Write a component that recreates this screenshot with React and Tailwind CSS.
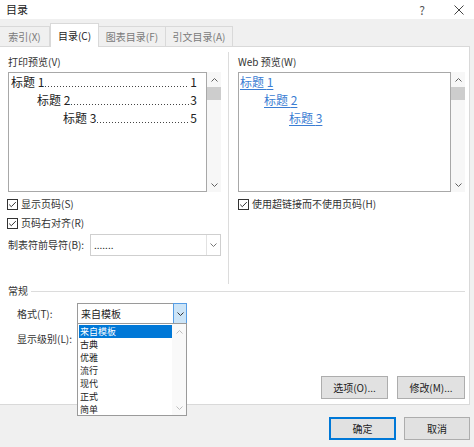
const Check = () => (
  <svg width="11" height="11" viewBox="0 0 11 11" className="shrink-0">
    <rect x="0.5" y="0.5" width="10" height="10" fill="#fff" stroke="#333" />
    <path d="M2.2 5.6 L4.3 7.7 L8.8 3.1" fill="none" stroke="#333" strokeWidth="1" />
  </svg>
);

const Chevron = ({ up, color = "#606060" }) => (
  <svg width="7" height="4" viewBox="0 0 7 4">
    <path
      d={up ? "M0.5 3.5 L3.5 0.5 L6.5 3.5" : "M0.5 0.5 L3.5 3.5 L6.5 0.5"}
      fill="none"
      stroke={color}
      strokeWidth="1"
    />
  </svg>
);

const ScrollBar = () => (
  <div className="w-[14px] h-full flex flex-col bg-[#f7f7f7]">
    <div className="h-[15px] flex items-center justify-center">
      <Chevron up />
    </div>
    <div className="h-[13px] bg-[#cdcdcd]" />
    <div className="flex-1" />
    <div className="h-[14px] flex items-center justify-center">
      <Chevron />
    </div>
  </div>
);

// tab leader: dotted line drawn as a repeating background
const PrintLine = ({ indent, n, page }) => (
  <div className="flex h-[18px] items-center whitespace-nowrap" style={{ paddingLeft: indent }}>
    <span>标题 {n}</span>
    <span className="flex-1 self-stretch mx-[1px] bg-[linear-gradient(to_right,#444_1px,transparent_1px)] bg-[length:3px_1px] bg-repeat-x bg-[position:0_13px]" />
    <span>{page}</span>
  </div>
);

const WebLine = ({ indent, n }) => (
  <div className="flex h-[18px] items-center" style={{ paddingLeft: indent }}>
    <span className="text-[#3b7dd3] underline underline-offset-[2px]">标题 {n}</span>
  </div>
);

const CheckRow = ({ children, className = "" }) => (
  <div className={"h-[14px] flex items-center gap-[3px] " + className}>
    <Check />
    <span>{children}</span>
  </div>
);

const Tab = ({ label, width, active }) =>
  active ? (
    <div
      className="h-[24px] -mb-px relative z-10 bg-white border-l border-t border-r border-[#d9d9d9] flex items-center justify-center text-[#222]"
      style={{ width }}
    >
      {label}
    </div>
  ) : (
    <div
      className="h-[20px] border-t border-r border-[#d9d9d9] flex items-center justify-center text-[#7a7a7a]"
      style={{ width }}
    >
      {label}
    </div>
  );

const formats = ["来自模板", "古典", "优雅", "流行", "现代", "正式", "简单"];

export default function App() {
  return (
    <div className="w-[474px] h-[447px] overflow-hidden bg-[#f0f0f0] font-['Noto_Sans_CJK_SC',sans-serif] text-[10px] leading-none text-[#333] select-none">
      {/* Title bar */}
      <div className="h-[19px] bg-white flex items-center pl-[6px] pr-[10px]">
        <span className="text-[11px] text-[#222]">目录</span>
        <span className="ml-auto mr-[29px] text-[12px] text-[#555]">?</span>
        <svg width="10" height="10" viewBox="0 0 10 10">
          <path d="M0.5 0.5 L9.5 9.5 M9.5 0.5 L0.5 9.5" stroke="#444" strokeWidth="1" />
        </svg>
      </div>

      {/* Tabs */}
      <div className="h-[27px] flex items-end">
        <Tab label="索引(X)" width={50} />
        <Tab label="目录(C)" width={49} active />
        <Tab label="图表目录(F)" width={67} />
        <Tab label="引文目录(A)" width={67} />
      </div>

      {/* Tab page */}
      <div className="w-[470px] h-[359px] bg-white border-t border-r border-b border-[#d9d9d9] flex flex-col pr-[4px]">
        <div className="h-[237px] flex pl-[8px]">
          {/* Print preview */}
          <div className="w-[214px] pt-[8px] flex flex-col">
            <div className="h-[14px] flex items-center">打印预览(V)</div>
            <div className="mt-[3px] h-[120px] flex">
              <div className="w-[199px] h-full border border-[#a8a8a8] bg-white pl-[2px] pr-[9px] text-[12px] text-[#222]">
                <PrintLine indent={0} n={1} page={1} />
                <PrintLine indent={26} n={2} page={3} />
                <PrintLine indent={52} n={3} page={5} />
              </div>
              <ScrollBar />
            </div>
            <CheckRow className="mt-[5px] -ml-px">显示页码(S)</CheckRow>
            <CheckRow className="mt-[5px] -ml-px">页码右对齐(R)</CheckRow>
            <div className="mt-[4px] h-[22px] flex items-center">
              <span className="w-[82px]">制表符前导符(B):</span>
              <div className="w-[131px] h-full border border-[#cfcfcf] bg-white flex">
                <div className="flex-1 pl-[3px] flex items-center text-[#222]">.......</div>
                <div className="w-[14px] border-l border-[#e2e2e2] flex items-center justify-center">
                  <Chevron color="#777" />
                </div>
              </div>
            </div>
          </div>

          <div className="ml-[6px] mt-[5px] w-px bg-[#dcdcdc]" />

          {/* Web preview */}
          <div className="ml-[9px] w-[227px] pt-[8px] flex flex-col">
            <div className="h-[14px] flex items-center">Web 预览(W)</div>
            <div className="mt-[3px] h-[120px] flex">
              <div className="w-[213px] h-full border border-[#a8a8a8] bg-white pl-[1px] text-[12px]">
                <WebLine indent={0} n={1} />
                <WebLine indent={24} n={2} />
                <WebLine indent={49} n={3} />
              </div>
              <ScrollBar />
            </div>
            <CheckRow className="mt-[5px]">使用超链接而不使用页码(H)</CheckRow>
          </div>
        </div>

        {/* General group */}
        <div className="h-[14px] flex items-center pl-[8px]">
          <span>常规</span>
          <div className="ml-[3px] flex-1 h-px bg-[#dcdcdc]" />
        </div>
        <div className="mt-[5px] h-[21px] flex items-center pl-[17px]">
          <span className="w-[60px]">格式(T):</span>
          <div className="relative w-[110px] h-full">
            <div className="w-full h-full border border-[#9a9a9a] bg-white flex">
              <div className="flex-1 pl-[3px] flex items-center text-[#222]">来自模板</div>
              <div className="w-[14px] -my-px -mr-px bg-[#cce4f7] border border-[#569de5] flex items-center justify-center">
                <Chevron color="#333" />
              </div>
            </div>
            <div className="absolute left-0 top-[20px] z-20 w-[110px] h-[93px] border border-[#9a9a9a] bg-white flex pl-px">
              <div className="w-[93px] pt-px text-[9px]">
                {formats.map((f, i) => (
                  <div
                    key={f}
                    className={
                      "h-[13px] flex items-center pl-px " +
                      (i === 0 ? "bg-[#0078d7] text-white" : "text-[#222]")
                    }
                  >
                    {f}
                  </div>
                ))}
              </div>
              <div className="w-[14px] h-full flex flex-col bg-[#f9f9f9]">
                <div className="h-[15px] flex items-center justify-center">
                  <Chevron up color="#bdbdbd" />
                </div>
                <div className="flex-1" />
                <div className="h-[14px] flex items-center justify-center">
                  <Chevron color="#bdbdbd" />
                </div>
              </div>
            </div>
          </div>
        </div>
        <div className="mt-[8px] h-[14px] flex items-center pl-[17px]">显示级别(L):</div>

        <div className="mt-[30px] flex justify-end gap-[9px]">
          <button className="w-[67px] h-[23px] bg-[#e1e1e1] border border-[#adadad] text-[#222]">选项(O)...</button>
          <button className="w-[68px] h-[23px] bg-[#e1e1e1] border border-[#adadad] text-[#222]">修改(M)...</button>
        </div>
      </div>

      {/* Bottom buttons */}
      <div className="pt-[12px] pr-[4px] flex justify-end gap-[8px]">
        <button className="w-[67px] h-[23px] bg-[#e1e1e1] border-2 border-[#0078d7] text-[#222]">确定</button>
        <button className="w-[66px] h-[23px] bg-[#e1e1e1] border border-[#adadad] text-[#222]">取消</button>
      </div>
    </div>
  );
}
